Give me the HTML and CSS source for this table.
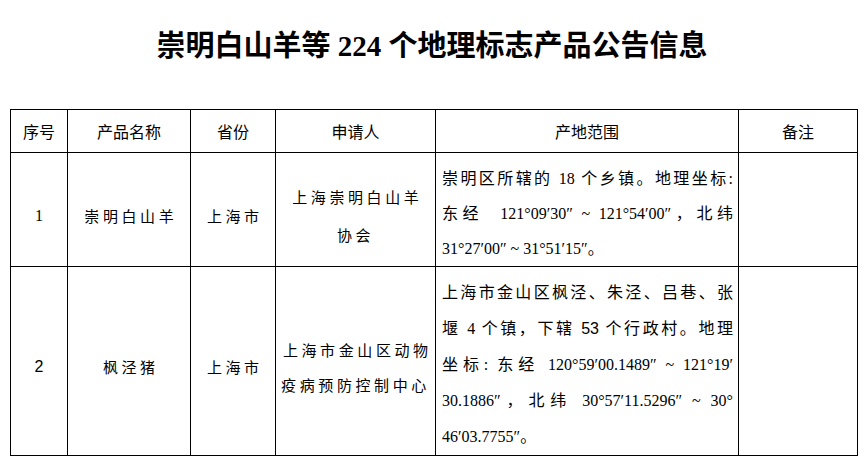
FILE: index.html
```html
<!DOCTYPE html>
<html lang="zh-CN">
<head>
<meta charset="utf-8">
<title>崇明白山羊等 224 个地理标志产品公告信息</title>
<link rel="stylesheet" href="styles.css">
</head>
<body>
<h1 class="title">崇明白山羊等 224 个地理标志产品公告信息</h1>
<table class="geo">
  <colgroup>
    <col class="c1"><col class="c2"><col class="c3"><col class="c4"><col class="c5"><col class="c6">
  </colgroup>
  <thead>
    <tr class="head">
      <th>序号</th>
      <th>产品名称</th>
      <th>省份</th>
      <th>申请人</th>
      <th>产地范围</th>
      <th>备注</th>
    </tr>
  </thead>
  <tbody>
    <tr class="r1">
      <td class="num">1</td>
      <td class="sp">崇明白山羊</td>
      <td class="sp">上海市</td>
      <td class="sp two">上海崇明白山羊<br>协会</td>
      <td class="area">
        <span class="ln">崇明区所辖的 18 个乡镇。地理坐标:</span>
        <span class="ln">东经&nbsp; 121°09′30″ ~ 121°54′00″，北纬</span>
        <span class="ln last">31°27′00″ ~ 31°51′15″。</span>
      </td>
      <td></td>
    </tr>
    <tr class="r2">
      <td class="num sans">2</td>
      <td class="sp">枫泾猪</td>
      <td class="sp">上海市</td>
      <td class="sp two">上海市金山区动物<br>疫病预防控制中心</td>
      <td class="area">
        <span class="ln">上海市金山区枫泾、朱泾、吕巷、张</span>
        <span class="ln">堰 4 个镇，下辖 <span class="sans">53</span> 个行政村。地理</span>
        <span class="ln">坐标: 东经 120°59′00.1489″ ~ 121°19′</span>
        <span class="ln">30.1886″，北纬 30°57′11.5296″ ~ 30°</span>
        <span class="ln last">46′03.7755″。</span>
      </td>
      <td></td>
    </tr>
  </tbody>
</table>
</body>
</html>
```

FILE: styles.css
```css
html, body {
  margin: 0;
  padding: 0;
  background: #fff;
  color: #000;
}

body {
  font-family: "Liberation Serif", "Noto Sans CJK SC", serif;
}

.title {
  margin: 0 0 48px;
  padding-top: 32px;
  font-size: 29px;
  line-height: 29px;
  font-weight: 700;
  text-align: center;
  letter-spacing: 0;
}

.geo {
  margin-left: 10px;
  width: 847px;
  border-collapse: collapse;
  table-layout: fixed;
}

.c1 { width: 57px; }
.c2 { width: 123px; }
.c3 { width: 85px; }
.c4 { width: 160px; }
.c5 { width: 303px; }
.c6 { width: 119px; }

.geo th,
.geo td {
  border: 1px solid #000;
  padding: 0;
  text-align: center;
  vertical-align: middle;
}

.head th {
  height: 42px;
  font-family: "Noto Sans CJK SC", sans-serif;
  font-weight: 400;
  font-size: 16px;
  line-height: 20px;
}

.r1 td,
.r2 td {
  padding-top: 12px;
}

.num {
  font-size: 16px;
}

.sans {
  font-family: "Liberation Sans", "Noto Sans CJK SC", sans-serif;
}

.sp {
  font-family: "Noto Sans CJK SC", sans-serif;
  font-size: 15px;
  letter-spacing: 3.6px;
  text-indent: 3.6px;
  line-height: 20px;
}

.r1 .two { line-height: 38px; }
.r2 .two { line-height: 35px; }

.geo td.area {
  padding: 8px 5px 0 6px;
  text-align: left;
  font-size: 16px;
}

.r1 .area { line-height: 35px; }
.r2 .area { line-height: 36px; }

.ln {
  display: block;
  white-space: nowrap;
  text-align: justify;
  text-align-last: justify;
}

.ln.last {
  text-align-last: left;
}
```
